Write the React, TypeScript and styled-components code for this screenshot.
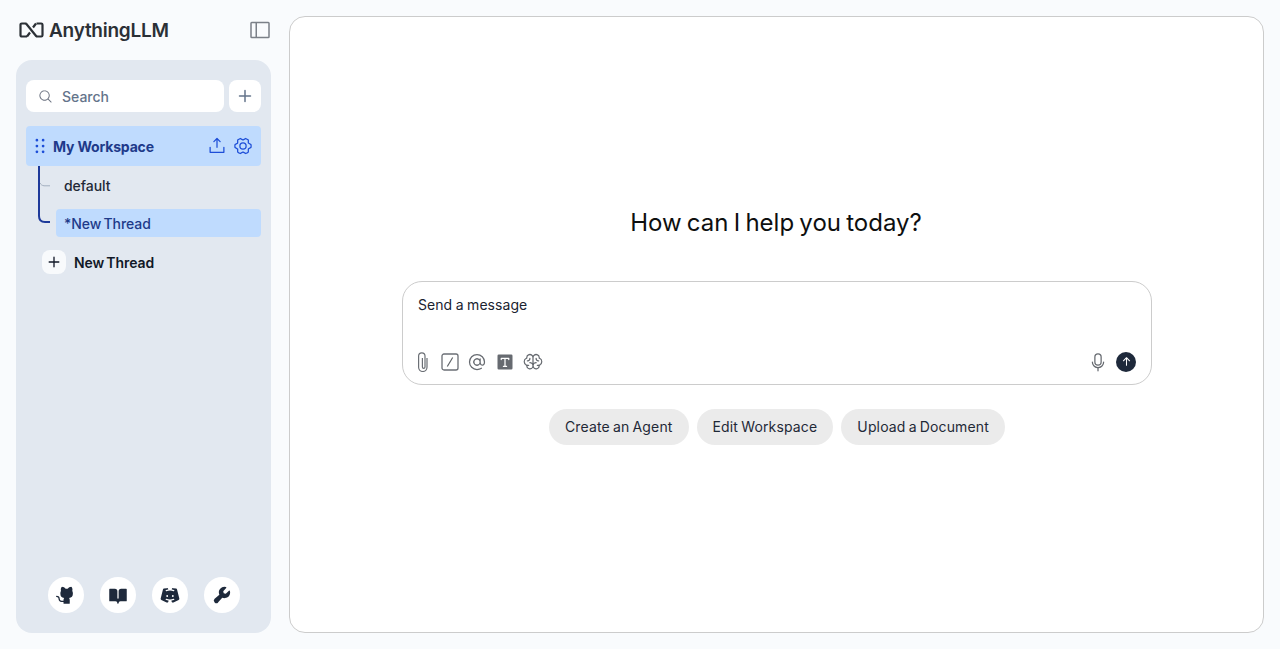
import styled, { createGlobalStyle } from "styled-components";
import {
    PiAt,
    PiBookOpenFill,
    PiBrain,
    PiDiscordLogoFill,
    PiDotsSixVerticalBold,
    PiGearSix,
    PiGithubLogoFill,
    PiMagnifyingGlass,
    PiMicrophone,
    PiPlusBold,
    PiSidebarSimple,
    PiTextTFill,
    PiUploadSimple,
    PiWrenchFill,
    PiArrowUpBold,
} from "react-icons/pi";

const FONT = `Inter, "Liberation Sans", sans-serif`;

const GlobalStyle = createGlobalStyle`
    html, body {
        margin: 0;
        height: 100%;
        background: #f9fbfd;
    }
    body {
        font-family: ${FONT};
        color: #0e0f0f;
    }
    #root {
        height: 100%;
    }
    * {
        box-sizing: border-box;
    }
`;

const THREADS = [
    { name: "default", active: false },
    { name: "*New Thread", active: true },
];

const SUGGESTIONS = ["Create an Agent", "Edit Workspace", "Upload a Document"];

const FOOTER_LINKS = [
    { key: "github", icon: <PiGithubLogoFill /> },
    { key: "docs", icon: <PiBookOpenFill /> },
    { key: "discord", icon: <PiDiscordLogoFill /> },
    { key: "settings", icon: <PiWrenchFill /> },
];

const LogoMark = () => (
    <svg width="25" height="16" viewBox="0 0 25 16" fill="none">
        <g stroke="#2b3036" strokeWidth="2.2">
            <path d="M7.500 1.500H2.800a1.300 1.300 0 0 0-1.300 1.300v10.400a1.300 1.300 0 0 0 1.300 1.300H8" />
            <path d="M17.500 1.500h4.700a1.300 1.300 0 0 1 1.300 1.300v10.400a1.300 1.300 0 0 1-1.300 1.300H17" />
            <path d="M7 1.500 17.500 14.500" />
            <path d="M8 14.500 11 10.500M14 5.500 17 1.500" />
        </g>
    </svg>
);

const ClipIcon = () => (
    <svg width="20" height="20" viewBox="0 0 20 20" fill="none">
        <path
            d="M14 6v9.300a4.200 4.200 0 0 1-8.400 0V4a3.200 3.200 0 0 1 6.400 0v11a1.300 1.300 0 0 1-2.600 0V6"
            stroke="#6b6f75"
            strokeWidth="1.200"
        />
    </svg>
);

const SlashIcon = () => (
    <svg width="18" height="18" viewBox="0 0 18 18" fill="none">
        <rect x="1" y="1" width="16" height="16" rx="2" stroke="#6b6f75" strokeWidth="1.300" />
        <path d="M11.700 4.500 6.300 13.500" stroke="#5f6368" strokeWidth="1.200" />
    </svg>
);

const BranchLines = () => (
    <Branch width="16" height="60" viewBox="0 0 16 60" fill="none">
        <path d="M3 17c.8 1.600 2 2.500 4 2.800h6" stroke="#a3afbf" strokeWidth="1" />
        <path d="M2 0v50c0 4 2 6 6 6h5" stroke="#1e3a9a" strokeWidth="2" />
    </Branch>
);

export default function App() {
    return (
        <Page>
            <GlobalStyle />
            <Side>
                <Brand>
                    <Logo>
                        <LogoMark />
                        <span>AnythingLLM</span>
                    </Logo>
                    <Collapse>
                        <PiSidebarSimple />
                    </Collapse>
                </Brand>
                <Panel>
                    <SearchRow>
                        <SearchBox>
                            <PiMagnifyingGlass />
                            <span>Search</span>
                        </SearchBox>
                        <AddButton>
                            <PiPlusBold />
                        </AddButton>
                    </SearchRow>
                    <Workspace>
                        <PiDotsSixVerticalBold className="grip" />
                        <span className="name">My Workspace</span>
                        <PiUploadSimple className="action" />
                        <PiGearSix className="action" />
                    </Workspace>
                    <Threads>
                        <BranchLines />
                        {THREADS.map((t) => (
                            <Thread key={t.name} $active={t.active}>
                                {t.name}
                            </Thread>
                        ))}
                    </Threads>
                    <NewThread>
                        <span className="plus">
                            <PiPlusBold />
                        </span>
                        New Thread
                    </NewThread>
                    <Footer>
                        {FOOTER_LINKS.map((l) => (
                            <FooterLink key={l.key}>{l.icon}</FooterLink>
                        ))}
                    </Footer>
                </Panel>
            </Side>
            <Main>
                <Heading>How can I help you today?</Heading>
                <Composer>
                    <Placeholder>Send a message</Placeholder>
                    <Tools>
                        <ToolGroup>
                            <Tool $size={20}>
                                <ClipIcon />
                            </Tool>
                            <Tool $size={18}>
                                <SlashIcon />
                            </Tool>
                            <Tool $size={20}>
                                <PiAt />
                            </Tool>
                            <Tool $size={20}>
                                <PiTextTFill />
                            </Tool>
                            <Tool $size={20}>
                                <PiBrain />
                            </Tool>
                        </ToolGroup>
                        <ToolGroup>
                            <Tool $size={20}>
                                <PiMicrophone />
                            </Tool>
                            <Send>
                                <PiArrowUpBold />
                            </Send>
                        </ToolGroup>
                    </Tools>
                </Composer>
                <Suggestions>
                    {SUGGESTIONS.map((s) => (
                        <Chip key={s}>{s}</Chip>
                    ))}
                </Suggestions>
            </Main>
        </Page>
    );
}

const Page = styled.div`
    display: flex;
    gap: 18px;
    height: 649px;
    padding: 16px;
    overflow: hidden;
`;

const Side = styled.aside`
    width: 255px;
    flex: none;
    display: flex;
    flex-direction: column;
    gap: 16px;
`;

const Brand = styled.div`
    height: 28px;
    display: flex;
    align-items: center;
    justify-content: space-between;
    padding: 0 0 0 3px;
`;

const Logo = styled.div`
    display: flex;
    align-items: center;
    gap: 5px;
    font-size: 19px;
    font-weight: 600;
    letter-spacing: -0.25px;
    color: #2b3036;
`;

const Collapse = styled.div`
    display: flex;
    margin-right: -1px;
    color: #7b8088;
    font-size: 24px;
`;

const Panel = styled.div`
    flex: 1;
    display: flex;
    flex-direction: column;
    padding: 20px 10px 20px;
    background: #e2e8f0;
    border-radius: 16px;
`;

const SearchRow = styled.div`
    display: flex;
    gap: 5px;
    margin-bottom: 14px;
`;

const SearchBox = styled.div`
    flex: 1;
    height: 32px;
    display: flex;
    align-items: center;
    gap: 9px;
    padding-left: 12px;
    background: #fff;
    border-radius: 8px;
    font-size: 14px;
    font-weight: 500;
    color: #64748b;
    svg {
        font-size: 15px;
        color: #6b7280;
    }
`;

const AddButton = styled.div`
    width: 32px;
    height: 32px;
    display: flex;
    align-items: center;
    justify-content: center;
    background: #fff;
    border-radius: 8px;
    font-size: 16px;
    color: #64748b;
`;

const Workspace = styled.div`
    height: 40px;
    display: flex;
    align-items: center;
    padding: 0 8px 0 7px;
    background: #bfdbfe;
    border-radius: 4px;
    font-size: 14px;
    font-weight: 700;
    letter-spacing: -0.17px;
    color: #1e3a8a;
    .grip {
        font-size: 22px;
        margin: 0 2px 0 -4px;
        color: #1d4ed8;
    }
    .name {
        flex: 1;
    }
    .action {
        font-size: 20px;
        color: #1d4ed8;
        margin-left: 6px;
    }
`;

const Threads = styled.div`
    position: relative;
    display: flex;
    flex-direction: column;
    gap: 10px;
    padding: 5px 0 0 30px;
`;

const Branch = styled.svg`
    position: absolute;
    top: 0;
    left: 11px;
`;

const Thread = styled.div<{ $active: boolean }>`
    height: 28px;
    display: flex;
    align-items: center;
    padding-left: 8px;
    border-radius: 4px;
    font-size: 14px;
    font-weight: 500;
    letter-spacing: -0.05px;
    word-spacing: -1.5px;
    background: ${({ $active }) => ($active ? "#bfdbfe" : "transparent")};
    color: ${({ $active }) => ($active ? "#1e3a8a" : "#1f2937")};
`;

const NewThread = styled.div`
    display: flex;
    align-items: center;
    gap: 8px;
    margin: 13px 0 0 16px;
    font-size: 14px;
    font-weight: 600;
    letter-spacing: -0.1px;
    word-spacing: -1.2px;
    color: #111827;
    .plus {
        width: 24px;
        height: 24px;
        display: flex;
        align-items: center;
        justify-content: center;
        border-radius: 8px;
        background: #f8fafc;
        font-size: 14px;
    }
`;

const Footer = styled.div`
    margin-top: auto;
    display: flex;
    justify-content: center;
    gap: 16px;
`;

const FooterLink = styled.div`
    width: 36px;
    height: 36px;
    display: flex;
    align-items: center;
    justify-content: center;
    border-radius: 50%;
    background: #fff;
    font-size: 20px;
    color: #1e293b;
`;

const Main = styled.main`
    flex: 1;
    display: flex;
    flex-direction: column;
    align-items: center;
    justify-content: center;
    padding: 2px 0 0 1px;
    background: #fff;
    border: 1px solid #ccc;
    border-radius: 16px;
`;

const Heading = styled.h1`
    margin: 0 0 42px;
    padding-right: 2px;
    font-size: 24px;
    line-height: 32px;
    font-weight: 400;
    word-spacing: -1.5px;
    color: #0e0f0f;
`;

const Composer = styled.div`
    width: 750px;
    height: 104px;
    display: flex;
    flex-direction: column;
    justify-content: space-between;
    padding: 14px 15px 12px 10px;
    border: 1px solid #ccc;
    border-radius: 20px;
    background: #fff;
`;

const Placeholder = styled.div`
    padding-left: 5px;
    font-size: 14px;
    line-height: 18px;
    letter-spacing: 0.05px;
    word-spacing: -0.5px;
    color: #1a2330;
`;

const Tools = styled.div`
    display: flex;
    align-items: center;
    justify-content: space-between;
`;

const ToolGroup = styled.div`
    display: flex;
    align-items: center;
    gap: 8px;
`;

const Tool = styled.span<{ $size: number }>`
    display: flex;
    font-size: ${({ $size }) => $size}px;
    color: #666a70;
`;

const Send = styled.span`
    width: 20px;
    height: 20px;
    display: flex;
    align-items: center;
    justify-content: center;
    border-radius: 50%;
    background: #1e293b;
    color: #fff;
    font-size: 11px;
`;

const Suggestions = styled.div`
    display: flex;
    gap: 8px;
    margin-top: 24px;
`;

const Chip = styled.div`
    height: 36px;
    display: flex;
    align-items: center;
    padding: 0 16px;
    border-radius: 18px;
    background: #ebebeb;
    font-size: 14px;
    letter-spacing: 0.15px;
    word-spacing: -1px;
    color: #1f2937;
`;
